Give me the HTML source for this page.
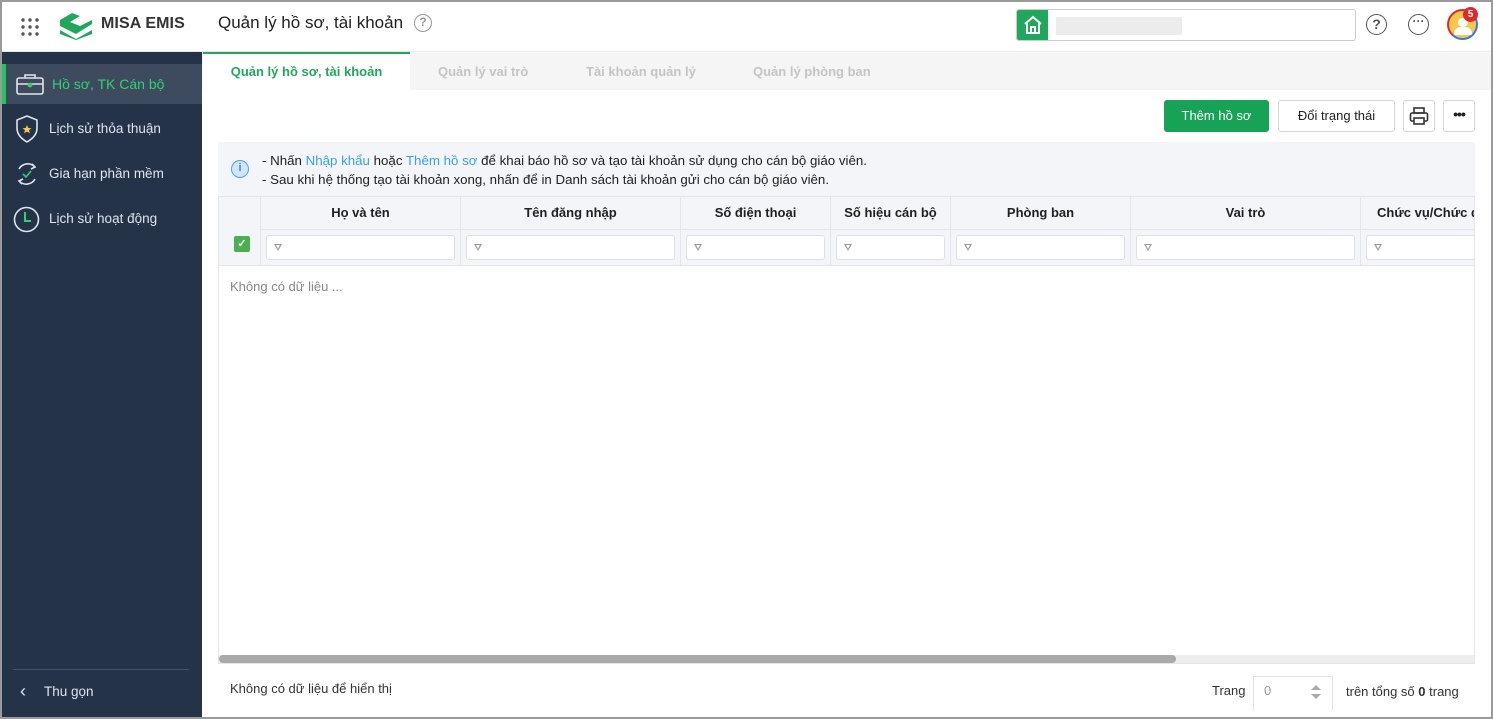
<!DOCTYPE html>
<html><head><meta charset="utf-8">
<style>
*{box-sizing:border-box;margin:0;padding:0}
body{width:1493px;height:719px;overflow:hidden;background:#fff;font-family:"Liberation Sans",sans-serif;font-size:13px;color:#212121;position:relative}
.frame{position:absolute;inset:0;border:2px solid #9a9a9a;pointer-events:none;z-index:10}
.a{position:absolute}
.side{left:2px;top:52px;width:200px;height:665px;background:#253349}
.item{position:absolute;left:0;width:200px;height:40px;color:#dfe4ea;font-size:13.5px;line-height:40px;padding-left:47px}
.hdr{left:2px;top:2px;width:1489px;height:50px;background:#fff;border-bottom:1px solid #e8e8e8}
.th{position:absolute;top:0;height:33px;line-height:33px;text-align:center;font-weight:bold;font-size:13px;border-right:1px solid #e3e5ea;color:#212121}
.fc{position:absolute;top:33px;height:36px;border-right:1px solid #e3e5ea;border-top:1px solid #e3e5ea}
.fi{position:absolute;top:5px;left:5px;right:5px;height:25px;background:#fff;border:1px solid #dcdfe5;border-radius:3px}
.fi:before{content:"";position:absolute;left:7px;top:8px;border-left:4px solid transparent;border-right:4px solid transparent;border-top:7px solid #999}
.fi:after{content:"";position:absolute;left:9px;top:9px;border-left:2px solid transparent;border-right:2px solid transparent;border-top:4px solid #fff}
</style></head><body>
<div class="frame"></div>
<div class="a hdr"></div>
<svg class="a" style="left:21px;top:18px" width="18" height="18" viewBox="0 0 18 18" fill="#555"><circle cx="2" cy="2" r="1.7"/><circle cx="9" cy="2" r="1.7"/><circle cx="16" cy="2" r="1.7"/><circle cx="2" cy="9" r="1.7"/><circle cx="9" cy="9" r="1.7"/><circle cx="16" cy="9" r="1.7"/><circle cx="2" cy="16" r="1.7"/><circle cx="9" cy="16" r="1.7"/><circle cx="16" cy="16" r="1.7"/></svg>
<svg class="a" style="left:58px;top:12px" width="36" height="28" viewBox="0 0 36 28"><path d="M2 8 L14 1 L22 4 L12 10 L22 14 L34 8 L34 12 L18 22 L2 14Z" fill="#1fa85c"/><path d="M2 18 L18 27 L34 18 L34 22 L18 28 L2 22Z" fill="#1fa85c"/></svg>
<div class="a" style="left:101px;top:15px;font-size:16px;font-weight:bold;color:#333;letter-spacing:.1px">MISA EMIS</div>
<div class="a" style="left:218px;top:13px;font-size:17px;color:#212121">Quản lý hồ sơ, tài khoản</div>
<div class="a" style="left:414px;top:14px;width:18px;height:18px;border:1.5px solid #999;border-radius:50%;color:#999;font-size:12px;text-align:center;line-height:15px;font-weight:bold">?</div>
<div class="a" style="left:1016px;top:9px;width:340px;height:32px;border:1px solid #ccc;border-radius:3px"></div>
<div class="a" style="left:1017px;top:10px;width:31px;height:30px;background:#1fa85c;border-radius:2px 0 0 2px"></div>
<svg class="a" style="left:1023px;top:15px" width="20" height="20" viewBox="0 0 20 20" fill="none" stroke="#fff" stroke-width="2"><path d="M2 9 L10 2 L18 9 M4 8 V18 H16 V8 M8 18 V12 H12 V18"/></svg>
<div class="a" style="left:1056px;top:17px;width:126px;height:18px;background:#ececec"></div>
<div class="a" style="left:1366px;top:14px;width:21px;height:21px;border:1.6px solid #555;border-radius:50%;text-align:center;font-size:14px;line-height:18px;color:#555;font-weight:bold">?</div>
<div class="a" style="left:1408px;top:14px;width:21px;height:21px;border:1.6px solid #555;border-radius:50%;text-align:center;font-size:12px;line-height:12px;color:#555;font-weight:bold">···</div>
<div class="a" style="left:1447px;top:9px;width:31px;height:31px;border-radius:50%;border:2.5px solid #e52629;border-right-color:#3a78e0;border-bottom-color:#3a78e0;background:#f2c94c"></div>
<div class="a" style="left:1458px;top:18px;width:10px;height:9px;border-radius:50%;background:#fff"></div>
<div class="a" style="left:1454px;top:27px;width:18px;height:8px;border-radius:9px 9px 2px 2px;background:#fff"></div>
<div class="a" style="left:1463px;top:7px;width:15px;height:15px;border-radius:50%;background:#e52629;color:#fff;font-size:10px;font-weight:bold;text-align:center;line-height:15px">5</div>

<div class="a side">
 <div class="item" style="top:12px;background:#3e4b5f;border-left:4px solid #22c55e;color:#2ed36f;font-size:14px;padding-left:46px">Hồ sơ, TK Cán bộ</div>
 <svg class="a" style="left:14px;top:21px" width="28" height="22" viewBox="0 0 28 22" fill="none" stroke="#dfe4ea" stroke-width="1.6"><rect x="1" y="5" width="26" height="16" rx="2"/><path d="M9 5 V2 H19 V5 M1 11 H27"/><circle cx="14" cy="12" r="1.6" fill="#2ed36f" stroke="#2ed36f"/></svg>
 <div class="item" style="top:57px">Lịch sử thỏa thuận</div>
 <svg class="a" style="left:13px;top:63px" width="24" height="28" viewBox="0 0 24 28" fill="none" stroke="#dfe4ea" stroke-width="1.6"><path d="M12 1 L22 5 V13 C22 20 17 24 12 27 C7 24 2 20 2 13 V5Z"/><path d="M12 10 L13.3 13 L16.5 13.2 L14 15.2 L14.9 18.3 L12 16.6 L9.1 18.3 L10 15.2 L7.5 13.2 L10.7 13Z" fill="#f2c94c" stroke="none"/></svg>
 <div class="item" style="top:102px">Gia hạn phần mềm</div>
 <svg class="a" style="left:12px;top:109px" width="26" height="26" viewBox="0 0 26 26" fill="none" stroke="#dfe4ea" stroke-width="1.6"><path d="M5 8 A10 10 0 0 1 21 6 M21 18 A10 10 0 0 1 5 20"/><path d="M18 3 L21 6 L17 8 M8 23 L5 20 L9 18"/><path d="M9 13 L12 16 L17 10" stroke="#2ed36f"/></svg>
 <div class="item" style="top:147px">Lịch sử hoạt động</div>
 <svg class="a" style="left:11px;top:154px" width="27" height="27" viewBox="0 0 27 27" fill="none" stroke="#dfe4ea" stroke-width="1.6"><circle cx="13.5" cy="13.5" r="12"/><path d="M12 6 V15 H18" stroke="#2ed36f" stroke-width="2"/></svg>
 <div class="a" style="left:11px;top:617px;width:176px;height:1px;background:#45526a"></div>
 <div class="a" style="left:18px;top:629px;color:#dfe4ea;font-size:18px">‹</div>
 <div class="a" style="left:42px;top:632px;color:#dfe4ea;font-size:13.5px">Thu gọn</div>
</div>

<div class="a" style="left:202px;top:53px;width:1289px;height:37px;background:#f5f5f5"></div>
<div class="a" style="left:203px;top:52px;width:207px;height:38px;background:#fff;border-top:2px solid #1fa85c;color:#1fa85c;font-weight:bold;font-size:13px;text-align:center;line-height:36px">Quản lý hồ sơ, tài khoản</div>
<div class="a" style="left:438px;top:64px;color:#c4c4c4;font-weight:bold">Quản lý vai trò</div>
<div class="a" style="left:586px;top:64px;color:#c4c4c4;font-weight:bold">Tài khoản quản lý</div>
<div class="a" style="left:753px;top:64px;color:#c4c4c4;font-weight:bold">Quản lý phòng ban</div>

<div class="a" style="left:1164px;top:100px;width:105px;height:32px;background:#17a356;border-radius:3px;color:#fff;text-align:center;line-height:32px;font-size:13px">Thêm hồ sơ</div>
<div class="a" style="left:1278px;top:100px;width:117px;height:32px;border:1px solid #d6d6d6;border-radius:3px;text-align:center;line-height:30px;font-size:13px">Đổi trạng thái</div>
<div class="a" style="left:1403px;top:100px;width:32px;height:32px;border:1px solid #d6d6d6;border-radius:3px"></div>
<svg class="a" style="left:1409px;top:106px" width="20" height="20" viewBox="0 0 20 20" fill="none" stroke="#333" stroke-width="1.6"><rect x="5" y="2" width="10" height="5"/><rect x="1.5" y="7" width="17" height="8" rx="1.5"/><rect x="5" y="12" width="10" height="6" fill="#fff"/></svg>
<div class="a" style="left:1443px;top:100px;width:32px;height:32px;border:1px solid #d6d6d6;border-radius:3px;text-align:center;line-height:26px;font-weight:bold;font-size:14px;letter-spacing:-1px">•••</div>

<div class="a" style="left:218px;top:142px;width:1257px;height:55px;background:#f4f5f8"></div>
<div class="a" style="left:231px;top:160px;width:18px;height:18px;border-radius:50%;background:#cfe6fb;border:1.5px solid #4aa3ef;color:#2d8ee6;font-size:11px;font-weight:bold;text-align:center;line-height:15px">i</div>
<div class="a" style="left:262px;top:151px;font-size:13.3px;line-height:19px">- Nhấn <span style="color:#3b9eea">Nhập khẩu</span> hoặc <span style="color:#3b9eea">Thêm hồ sơ</span> để khai báo hồ sơ và tạo tài khoản sử dụng cho cán bộ giáo viên.<br>- Sau khi hệ thống tạo tài khoản xong, nhấn để in Danh sách tài khoản gửi cho cán bộ giáo viên.</div>

<div class="a" style="left:218px;top:196px;width:1257px;height:468px;border:1px solid #e3e5ea;border-top:none;overflow:hidden">
 <div class="a" style="left:0;top:0;width:1257px;height:70px;background:#f4f5f8;border-bottom:1px solid #e3e5ea;border-top:1px solid #e3e5ea"></div>
 <div class="th" style="left:0;width:42px;height:70px"></div>
 <div class="a" style="left:15px;top:40px;width:16px;height:16px;background:#4caf50;border-radius:2px;color:#fff;font-size:11px;text-align:center;line-height:16px;font-weight:bold">✓</div>
 <div class="th" style="left:42px;width:200px">Họ và tên</div>
 <div class="th" style="left:242px;width:220px">Tên đăng nhập</div>
 <div class="th" style="left:462px;width:150px">Số điện thoại</div>
 <div class="th" style="left:612px;width:120px">Số hiệu cán bộ</div>
 <div class="th" style="left:732px;width:180px">Phòng ban</div>
 <div class="th" style="left:912px;width:230px">Vai trò</div>
 <div class="th" style="left:1142px;width:200px;text-align:left;padding-left:16px;white-space:nowrap;overflow:hidden">Chức vụ/Chức danh</div>
 <div class="fc" style="left:42px;width:200px"><div class="fi"></div></div>
 <div class="fc" style="left:242px;width:220px"><div class="fi"></div></div>
 <div class="fc" style="left:462px;width:150px"><div class="fi"></div></div>
 <div class="fc" style="left:612px;width:120px"><div class="fi"></div></div>
 <div class="fc" style="left:732px;width:180px"><div class="fi"></div></div>
 <div class="fc" style="left:912px;width:230px"><div class="fi"></div></div>
 <div class="fc" style="left:1142px;width:200px"><div class="fi"></div></div>
 <div class="a" style="left:11px;top:83px;color:#888;font-size:13px">Không có dữ liệu ...</div>
 <div class="a" style="left:0;top:459px;width:1257px;height:9px;background:#ededed"></div>
 <div class="a" style="left:0;top:459px;width:957px;height:8px;background:#a9a9a9;border-radius:4px"></div>
</div>

<div class="a" style="left:230px;top:681px;color:#333">Không có dữ liệu để hiển thị</div>
<div class="a" style="left:1212px;top:683px;color:#333">Trang</div>
<div class="a" style="left:1253px;top:676px;width:80px;height:34px;border:1px solid #e3e3e3;border-bottom:none"></div>
<div class="a" style="left:1264px;top:683px;color:#999">0</div>
<div class="a" style="left:1311px;top:685px;border-left:5px solid transparent;border-right:5px solid transparent;border-bottom:5px solid #aaa"></div>
<div class="a" style="left:1311px;top:694px;border-left:5px solid transparent;border-right:5px solid transparent;border-top:5px solid #aaa"></div>
<div class="a" style="left:1346px;top:684px;color:#333">trên tổng số <b>0</b> trang</div>
</body></html>
